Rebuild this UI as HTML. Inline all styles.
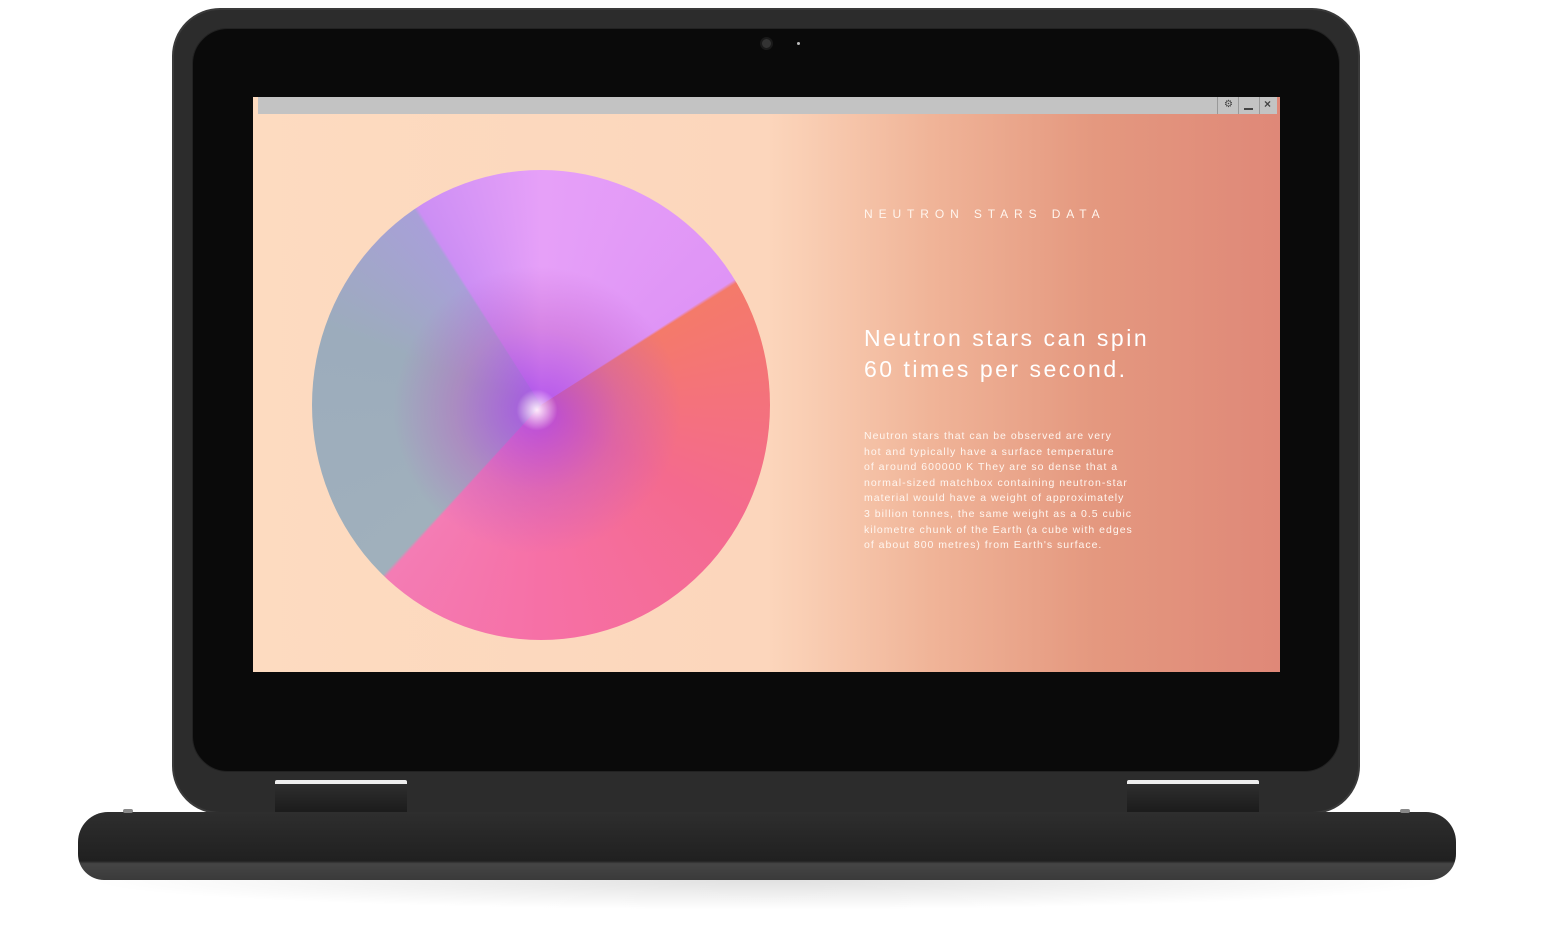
<!DOCTYPE html>
<html><head><style>
body{margin:0;width:1548px;height:941px;background:#fff;position:relative;overflow:hidden;font-family:"Liberation Sans",sans-serif}
div{position:absolute;box-sizing:border-box}
</style></head><body>
<div style="left:80px;top:880px;width:1376px;height:30px;background:radial-gradient(ellipse at 50% 0,rgba(0,0,0,.12),rgba(0,0,0,0) 70%)"></div>
<div style="left:172px;top:8px;width:1188px;height:806px;border-radius:48px;background:#2c2c2c;border:2px solid #3a3a3a"></div>
<div style="left:192px;top:28px;width:1148px;height:744px;border-radius:36px;background:#0a0a0a;border:1px solid #222"></div>
<div style="left:760px;top:37px;width:13px;height:13px;border-radius:50%;background:#333;border:2px solid #1a1a1a"></div>
<div style="left:797px;top:42px;width:3px;height:3px;border-radius:50%;background:#bbb"></div>
<div style="left:253px;top:97px;width:1027px;height:575px;background:linear-gradient(90deg,#fddbc0 0%,#fcd6bc 50%,#f0b498 66%,#e4987f 82%,#df8878 100%)"></div>
<div style="left:258px;top:97px;width:1019px;height:17px;background:#c3c3c3"></div>
<div style="left:1217px;top:97px;width:1px;height:17px;background:#999"></div>
<div style="left:1238px;top:97px;width:1px;height:17px;background:#999"></div>
<div style="left:1259px;top:97px;width:1px;height:17px;background:#999"></div>
<div style="left:1224px;top:99px;font-size:10px;color:#444">⚙</div>
<div style="left:1244px;top:108px;width:9px;height:2px;background:#444"></div>
<div style="left:1264px;top:97px;font-size:12px;color:#444;font-weight:bold">×</div>
<div style="left:312px;top:170px;width:458px;height:470px;border-radius:50%;background:conic-gradient(from 0deg,#e6a0f8 0deg,#df94f6 57deg,#f47a6a 58deg,#f46a8e 120deg,#f670a6 180deg,#f47cb4 222deg,#a0b0bc 223deg,#9cacbc 290deg,#a8a0d8 327deg,#cc8ef4 328deg,#e6a0f8 360deg)"></div>
<div style="left:392px;top:265px;width:290px;height:290px;border-radius:50%;background:radial-gradient(circle,rgba(255,240,255,.95) 0,rgba(170,70,230,.7) 10%,rgba(190,90,200,.4) 40%,rgba(0,0,0,0) 70%)"></div>
<div style="left:864px;top:207px;font-size:12px;letter-spacing:5.9px;color:#fff5ee">NEUTRON STARS DATA</div>
<div style="left:864px;top:323px;font-size:23px;letter-spacing:2.5px;line-height:31px;color:#fff">Neutron stars can spin<br>60 times per second.</div>
<div style="left:864px;top:429px;white-space:nowrap;font-size:10.5px;letter-spacing:1px;line-height:15.6px;color:#fff6f0">Neutron stars that can be observed are very<br>hot and typically have a surface temperature<br>of around 600000 K They are so dense that a<br>normal-sized matchbox containing neutron-star<br>material would have a weight of approximately<br>3 billion tonnes, the same weight as a 0.5 cubic<br>kilometre chunk of the Earth (a cube with edges<br>of about 800 metres) from Earth's surface.</div>
<div style="left:275px;top:780px;width:132px;height:34px;background:linear-gradient(#2e2e2e,#1a1a1a);border-top:4px solid #eee;border-radius:2px"></div>
<div style="left:1127px;top:780px;width:132px;height:34px;background:linear-gradient(#2e2e2e,#1a1a1a);border-top:4px solid #eee;border-radius:2px"></div>
<div style="left:78px;top:812px;width:1378px;height:68px;border-radius:30px 30px 26px 26px;background:linear-gradient(180deg,#2e2e2e 0%,#202020 72%,#454545 76%,#3a3a3a 100%)"></div>
<div style="left:123px;top:809px;width:10px;height:4px;border-radius:3px;background:#888"></div>
<div style="left:1400px;top:809px;width:10px;height:4px;border-radius:3px;background:#888"></div>
</body></html>
